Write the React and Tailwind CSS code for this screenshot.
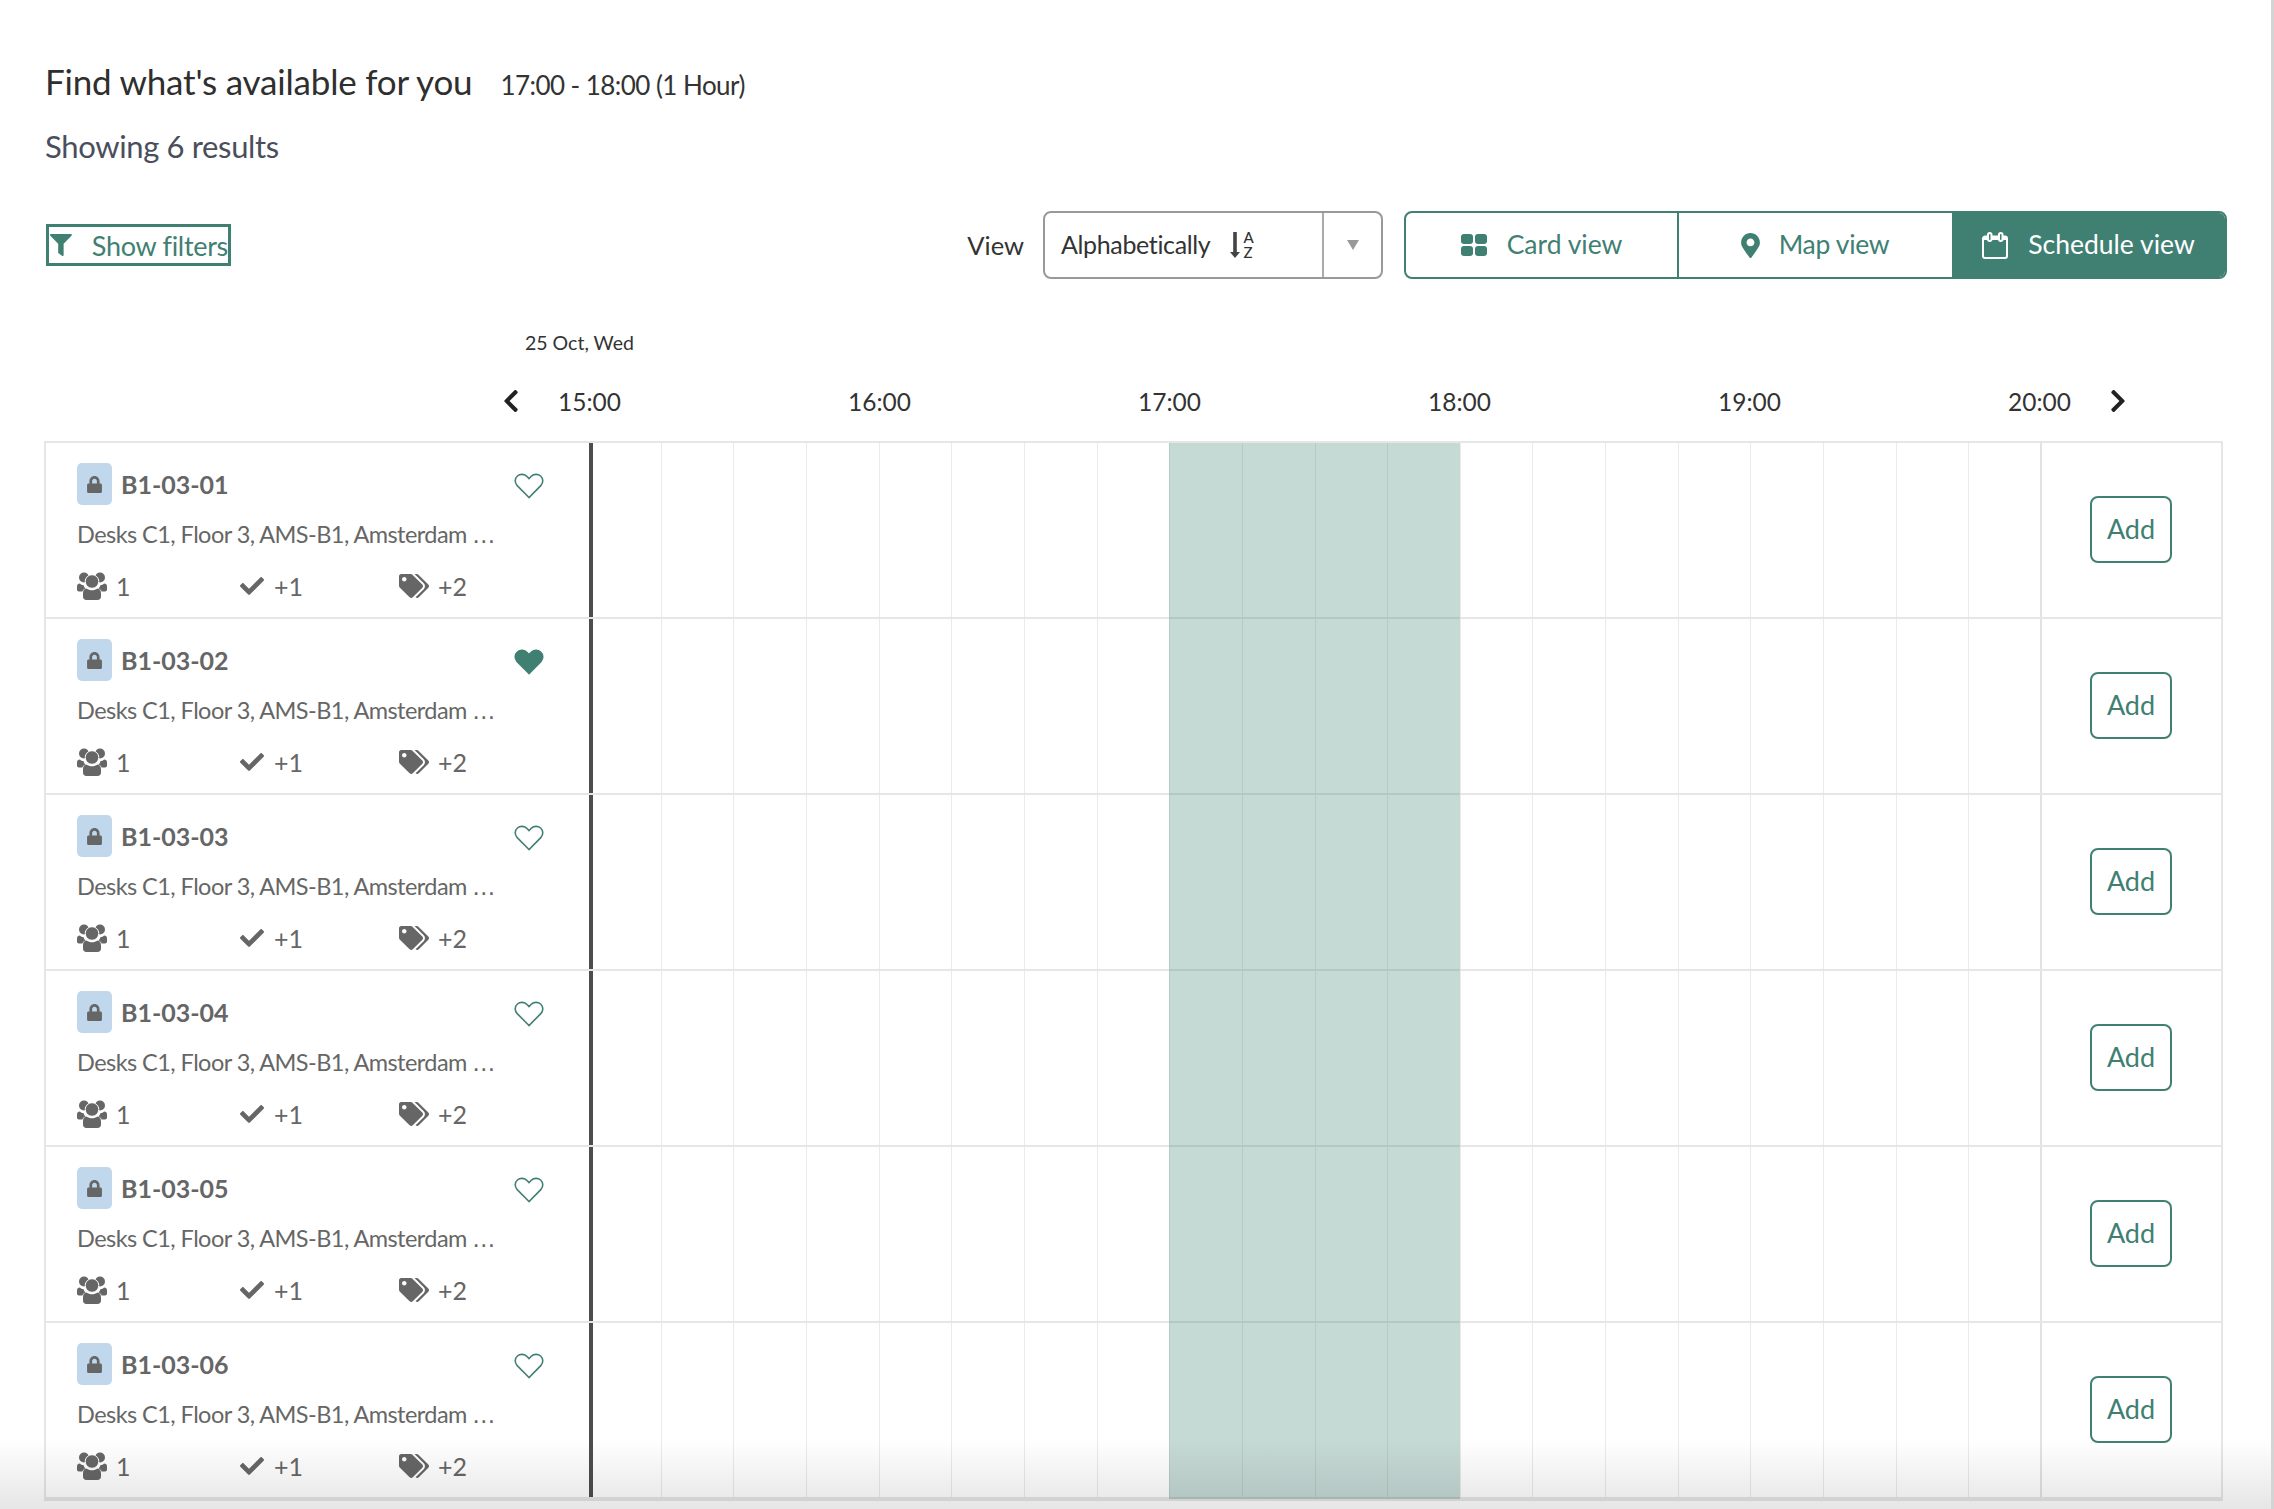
import React from 'react';
import { FaCheck, FaChevronLeft, FaChevronRight, FaFilter, FaLock, FaMapMarkerAlt, FaTags } from 'react-icons/fa';

const ROWS = ['B1-03-01', 'B1-03-02', 'B1-03-03', 'B1-03-04', 'B1-03-05', 'B1-03-06'];
const HOURS = ['15:00', '16:00', '17:00', '18:00', '19:00', '20:00'];
const QUARTERS = Array.from({ length: 20 }, (_, i) => i);

function Heart({ filled }) {
  return (
    <svg viewBox="0 0 30 26" className="h-[26px] w-[30px]" fill={filled ? '#408073' : 'none'} stroke="#408073" strokeWidth="1.6">
      <path d="M15 24.5 3.2 12.6C0.4 9.7 0.7 5.4 3.4 3 6.2 0.6 10.6 0.9 13 3.5L15 5.6 17 3.5C19.4 0.9 23.8 0.6 26.6 3 29.3 5.4 29.6 9.7 26.8 12.6Z" />
    </svg>
  );
}

function UsersIcon() {
  return (
    <svg viewBox="0 0 30 28" className="h-[28px] w-[30px]" fill="#666666">
      <circle cx="7" cy="5.5" r="5" />
      <circle cx="23" cy="5.5" r="5" />
      <circle cx="15" cy="9.5" r="6.8" stroke="white" strokeWidth="1" />
      <path d="M0 14.5C0 12.5 1 11.5 3 11.5 4 12.5 5 13 6.5 13 6.8 14.5 7.5 15.6 8.5 16.6 7 17.2 6 18 5.3 19.5H2C0.7 19.5 0 18.7 0 17.5Z" />
      <path d="M30 14.5C30 12.5 29 11.5 27 11.5 26 12.5 25 13 23.5 13 23.2 14.5 22.5 15.6 21.5 16.6 23 17.2 24 18 24.7 19.5H28C29.3 19.5 30 18.7 30 17.5Z" />
      <path d="M9.5 16.5C11 17.7 13 18.3 15 18.3 17 18.3 19 17.7 20.5 16.5 23 16.8 24 18.5 24 21.5V24.5C24 26.8 22.7 28 20.5 28H9.5C7.3 28 6 26.8 6 24.5V21.5C6 18.5 7 16.8 9.5 16.5Z" />
    </svg>
  );
}

function Row({ name, favourite }) {
  return (
    <div className="flex h-[176px] border-b-2 border-[#e6e6e6] last:h-[173px] last:border-b-0">
      <div className="w-[543px] shrink-0 pl-[31px] pr-[31px] pt-[20px] text-[#666666]">
        <div className="flex h-[42px] items-center">
          <span className="flex h-[42px] w-[35px] items-center justify-center rounded-[5px] bg-[#c0d7ec]">
            <FaLock className="text-[17px]" />
          </span>
          <span className="ml-[9px] text-[25px] font-bold leading-none">{name}</span>
          <span className="ml-auto mr-[14px] mt-[3px] flex">
            <Heart filled={favourite} />
          </span>
        </div>
        <div className="mt-[14px] whitespace-nowrap text-[23.5px] leading-[30px] tracking-[-0.55px]">Desks C1, Floor 3, AMS-B1, Amsterdam <span className="font-['DejaVu_Sans',sans-serif] text-[23px] tracking-normal">…</span></div>
        <div className="mt-[21px] flex h-[30px] items-center text-[25px] leading-none">
          <span className="flex w-[163px] items-center">
            <UsersIcon />
            <span className="ml-[9px]">1</span>
          </span>
          <span className="flex w-[159px] items-center">
            <FaCheck className="text-[24px]" />
            <span className="ml-[10px]">+1</span>
          </span>
          <span className="flex items-center">
            <FaTags className="text-[30px]" />
            <span className="ml-[9px]">+2</span>
          </span>
        </div>
      </div>
      <div className="grid w-[1453px] shrink-0 grid-cols-20">
        {QUARTERS.map((q) => (
          <div key={q} className={`border-r border-[#eaeaea] ${q === 0 ? 'border-l-4 border-l-[#4d4d4d]' : ''} ${q === 19 ? 'border-r-2 border-r-[#e2e2e2]' : ''}`} />
        ))}
      </div>
      <div className="flex flex-1 items-center justify-center pb-[1px] pr-[1px]">
        <button className="h-[67px] w-[82px] rounded-[8px] border-2 border-[#408073] text-[27px] text-[#408073]">Add</button>
      </div>
    </div>
  );
}

export default function App() {
  return (
    <div className="relative h-[1509px] w-[2274px] overflow-hidden border-r-[3px] border-[#d4d4d4] bg-white font-['Lato',sans-serif] text-[#333333]">
      <div className="pl-[45px] pt-[58px]">
        <div className="flex items-baseline">
          <h1 className="text-[35px] font-normal leading-[46px] tracking-[-0.2px] text-[#2f2f2f]">Find what's available for you</h1>
          <span className="ml-[28px] text-[26px] tracking-[-0.55px]">17:00 - 18:00 (1 Hour)</span>
        </div>
        <p className="mt-[21px] text-[31px] leading-[40px] tracking-[-0.35px] text-[#4a4e5c]">Showing 6 results</p>
      </div>

      <div className="mt-[45px] flex h-[68px] items-center pl-[46px] pr-[44px]">
        <button className="flex h-[42px] w-[185px] items-center whitespace-nowrap border-[3px] border-[#408073] text-[27px] leading-none tracking-[-0.3px] text-[#408073]">
          <FaFilter className="ml-[1px] text-[24px]" />
          <span className="ml-[20px]">Show filters</span>
        </button>
        <span className="ml-auto text-[25.5px]">View</span>
        <div className="ml-[19px] flex h-[68px] w-[340px] rounded-[8px] border-2 border-[#999999]">
          <div className="flex w-[279px] items-center border-r-2 border-[#aaaaaa] pl-[16px] text-[25px] tracking-[-0.35px]">
            Alphabetically
            <span className="ml-[20px] flex items-center">
              <svg viewBox="0 0 10 26" className="h-[26px] w-[10px]" fill="#444444">
                <path d="M3.2 0h3.6v20H10l-5 6-5-6h3.2z" />
              </svg>
              <span className="ml-[3px] flex flex-col text-[15px] font-medium leading-[15px]">
                <span>A</span>
                <span>Z</span>
              </span>
            </span>
          </div>
          <div className="flex flex-1 items-center justify-center">
            <svg viewBox="0 0 12 10" className="h-[10px] w-[12px]" fill="#999999">
              <path d="M0 0h12L6 10z" />
            </svg>
          </div>
        </div>
        <div className="ml-[21px] flex h-[68px] w-[823px] overflow-hidden rounded-[8px] border-2 border-[#408073] text-[26.5px] text-[#408073]">
          <button className="flex w-[273px] items-center justify-center border-r-2 border-[#408073]">
            <span className="mr-[20px] grid grid-cols-2 gap-[2px]">
              <i className="h-[10px] w-[12px] rounded-[3px] bg-[#408073]" />
              <i className="h-[10px] w-[12px] rounded-[3px] bg-[#408073]" />
              <i className="h-[10px] w-[12px] rounded-[3px] bg-[#408073]" />
              <i className="h-[10px] w-[12px] rounded-[3px] bg-[#408073]" />
            </span>
            Card view
          </button>
          <button className="flex w-[273px] items-center justify-center pr-[4px] tracking-[-0.3px]">
            <FaMapMarkerAlt className="mr-[16px] text-[25px]" />
            Map view
          </button>
          <button className="flex flex-1 items-center justify-center bg-[#408073] text-white">
            <svg viewBox="0 0 26 27" className="mr-[20px] h-[27px] w-[26px]" fill="none" stroke="white" strokeWidth="2">
              <path d="M3 4.5H23a2 2 0 0 1 2 2V24a2 2 0 0 1-2 2H3a2 2 0 0 1-2-2V6.5a2 2 0 0 1 2-2Z" />
              <path d="M1 6.5h24" strokeWidth="3" />
              <rect x="6" y="1" width="3.5" height="8" rx="1.7" fill="#408073" />
              <rect x="17" y="1" width="3.5" height="8" rx="1.7" fill="#408073" />
            </svg>
            Schedule view
          </button>
        </div>
      </div>

      <div className="ml-[525px] mt-[51px] text-[19.5px] leading-[26px]">25 Oct, Wed</div>
      <div className="mt-[26px] flex h-[40px] items-center text-[24.5px]">
        <FaChevronLeft className="ml-[498px] -translate-y-[1px] text-[26px] text-[#222222]" />
        <div className="ml-[34px] flex w-[1513px] justify-between">
          {HOURS.map((h) => (
            <span key={h}>{h}</span>
          ))}
        </div>
        <FaChevronRight className="ml-[34px] -translate-y-[1px] text-[26px] text-[#222222]" />
      </div>

      <div className="relative ml-[44px] mt-[19px] w-[2179px] border-2 border-[#e6e6e6]">
        {ROWS.map((name, i) => (
          <Row key={name} name={name} favourite={i === 1} />
        ))}
        <div className="pointer-events-none absolute inset-y-0 left-[1123px] w-[291px] bg-[#408073]/30" />
      </div>

      <div className="pointer-events-none absolute inset-x-0 bottom-0 h-[70px] bg-linear-to-b from-transparent to-black/10" />
    </div>
  );
}
